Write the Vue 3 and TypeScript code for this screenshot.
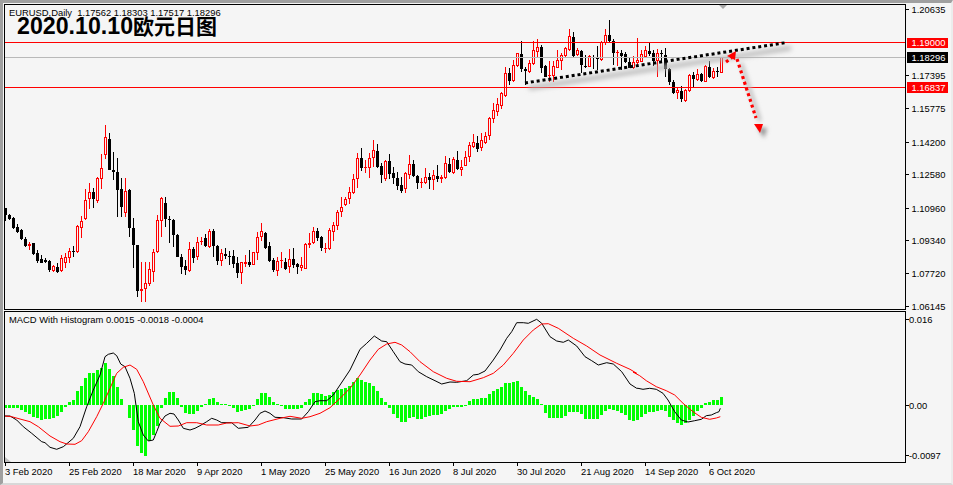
<script setup lang="ts">
type C = [number, number, number, number, number]
// [isUp, bodyTop, bodyBottom, wickTop, wickBottom] in 3x crop units
const segA: C[] = [
  [0,145,165,145,183],[0,165,177,162,180],[0,173,204,172,207],[0,201,216,192,218],[0,210,237,208,240],
  [0,237,258,230,262],[1,252,257,245,270],[0,250,282,248,285],[0,278,304,270,308],[0,296,308,285,310],
  [0,301,306,293,310],[0,303,330,300,335],[1,318,332,314,336],[0,321,335,310,338],[1,294,334,285,336],
  [1,291,310,280,325],[1,272,293,265,308],[0,272,274,258,290],[1,198,276,195,280],[1,184,203,168,235],
  [1,121,177,88,180],[1,96,118,70,148],[0,96,118,85,145],[1,54,123,52,128],[1,25,56,-18,88],
  [1,-69,-15,-105,-3],[0,-63,30,-81,30],[0,30,36,-24,60],[0,35,90,-6,170],[0,87,140,55,170],
  [1,93,160,55,170],[0,90,203,88,230],[0,204,254,175,323],[0,255,392,255,412],[1,388,392,305,425],
  [1,370,386,305,425],[1,328,372,305,378],[1,277,335,268,365],[1,181,275,165,280],[1,114,184,112,230],
  [0,130,176,112,200],[0,176,178,168,248],[0,180,225,178,262],[0,225,290,222,292],[0,290,320,282,342],
  [0,319,330,300,345],[1,268,332,245,335],[0,267,294,260,308],[1,247,292,232,300],[1,243,245,232,255],
  [0,235,257,222,260],[1,214,261,208,264],[0,213,259,207,290],[0,257,302,255,315],[1,280,302,268,318],
  [0,282,287,265,298],[0,287,289,272,315],[0,288,312,270,323],[0,310,338,290,355],[1,307,340,305,372],
  [1,306,312,285,322],[0,306,314,270,322],[1,277,314,275,316],[1,232,280,215,300],[1,214,230,190,244],
  [0,218,263,215,267],[0,258,302,245,305],[0,300,330,295,335],[1,304,332,290,348],[1,300,304,277,325],
  [0,306,326,295,330],[1,296,322,268,340],[0,296,315,265,325],[0,312,322,308,342],[1,314,324,292,333],
  [1,253,326,248,328],[1,250,256,218,265],[1,214,250,200,252],[0,213,233,205,243],
]
// i79..83 in real pixels
const segB: C[] = [
  [0,237,248,236,251],[1,248,249,243,253],[1,230,249,228,250],[1,225,232,222,241],[1,212,226,210,230],
]
const segC: C[] = [
  [1,381,396,351,411],[1,358,374,350,378],[1,337,358,320,372],[1,298,340,282,342],[1,235,298,220,323],
  [0,235,263,205,272],[1,261,263,240,278],[1,235,263,220,293],[1,210,233,180,262],[0,213,261,192,265],
  [0,258,285,250,310],[1,243,298,240,302],[0,243,282,222,298],[0,280,293,262,312],[0,293,318,277,330],
  [0,316,332,290,338],[1,280,328,277,338],[1,253,284,225,298],[0,253,288,240,292],[0,288,308,285,326],
  [1,307,309,293,325],[1,292,308,265,312],[0,292,300,278,327],[1,286,299,270,330],[0,288,296,255,305],
  [1,290,298,284,308],[1,250,293,228,296],[0,252,275,235,280],[1,238,278,232,282],[0,240,268,212,270],
  [1,260,269,240,288],[1,232,257,212,258],[1,196,230,185,245],[1,187,200,163,205],[0,190,208,168,215],
]
const segD: C[] = [
  [1,420,445,400,452],[1,408,430,395,432],[1,354,407,350,420],[1,330,358,310,370],[1,312,335,295,348],
  [1,280,318,275,328],[1,220,288,202,290],[0,218,242,205,255],[1,196,243,180,245],[1,160,198,158,200],
  [0,162,207,123,215],[0,207,212,200,255],[1,190,215,180,218],[1,151,192,123,195],[1,142,155,118,170],
  [0,140,203,135,218],[0,198,230,195,232],[1,226,229,183,245],[1,199,228,182,245],[1,180,203,150,205],
  [1,165,183,158,210],[1,145,167,142,172],[1,109,150,87,152],[0,112,168,97,172],[1,150,166,145,168],
  [0,153,195,150,218],[0,197,200,165,203],[1,168,200,165,202],[0,170,173,165,208],[0,172,178,138,210],
  [1,125,180,122,182],[1,106,130,88,135],[0,106,124,60,127],[0,122,158,118,195],[1,157,159,150,197],
  [0,160,167,150,210],[0,163,186,155,188],[0,187,205,175,205],[1,186,205,168,207],[1,180,190,115,200],
  [1,163,185,150,187],[1,150,170,138,172],[0,152,162,130,168],[0,160,183,150,197],[1,160,184,148,232],
  [0,160,163,150,185],[0,166,207,145,232],[0,207,245,205,255],[0,245,278,240,282],[1,270,278,260,297],
  [0,272,298,258,305],[1,270,302,268,305],[1,225,274,222,276],[0,225,238,215,262],[1,222,240,207,242],
  [0,222,242,218,245],[1,198,245,195,247],[0,202,232,183,235],[1,212,234,205,236],[0,212,214,200,232],
  [1,172,218,170,220],
]
const conv = (c: C, off: number, div: number) => ({
  up: c[0] === 1,
  bt: Math.round(off + c[1] / div),
  bb: Math.round(off + c[2] / div),
  wt: Math.round(off + c[3] / div),
  wb: Math.round(off + c[4] / div),
})
const candles = [
  ...segA.map(c => conv(c, 160, 3)),
  ...segB.map(c => conv(c, 0, 1)),
  ...segC.map(c => conv(c, 80, 3)),
  ...segD.map(c => conv(c, 0, 3)),
].map((c, i) => ({ ...c, x: 5 + 4 * i }))

const hist3 = [
  -8,-8,-8,-9,-15,-22,-28,-35,-40,-44,-43,-42,-38,-34,-20,-5,
  8,15,42,57,80,95,95,105,110,125,108,87,55,18,0,-38,-75,-122,-145,-152,-108,-90,-62,-8,
  20,40,40,20,-5,-25,-28,-28,-18,-5,3,17,20,10,4,2,-4,-10,-20,-18,-15,-12,-3,18,35,35,25,8,2,-2,
  -12,-12,-12,-12,-8,8,17,35,35,
  33,27,30,40,45,48,52,58,68,80,75,70,65,58,42,20,8,-10,-27,-40,-52,-50,-40,-37,-42,-42,-37,-33,-30,-30,-28,-17,-12,-5,-5,-5,-3,
  12,18,18,22,22,33,43,47,53,65,65,68,72,55,42,30,25,18,2,-25,-38,-40,-40,-38,-32,-20,-20,-20,-28,-42,-42,-42,-42,-30,-18,-12,-15,-18,-25,-30,-45,-48,-45,
  -35,-28,-22,-20,-18,-15,-18,-35,-45,-55,-60,-55,-45,-33,-18,-8,5,8,15,15,24,
]
const bars = hist3.map((v, i) => {
  const h = Math.max(v === 0 ? 0 : 1, Math.round(Math.abs(v) / 3))
  return { x: 4 + 4 * i, y: v >= 0 ? 405 - h : 405, h }
})

type P = [number, number]
const toPts = (pts: P[], xo: number) => pts.map(p => `${(xo + p[0] / 3).toFixed(1)},${(310 + p[1] / 3).toFixed(1)}`)
const blackLine = [
  ...toPts([[14,318],[30,318],[50,330],[70,350],[95,370],[125,395],[135,398],[150,412],[170,418],[190,410],[220,385],[240,350],[260,290],[280,240],[300,195],[315,140],[325,133],[340,129],[350,137],[362,162],[375,170],[390,205],[403,250],[415,335],[430,375],[445,393],[460,390],[470,365],[480,340],[495,318],[510,310],[522,312],[535,330],[550,355],[570,360],[585,355],[600,347],[620,335],[635,325],[650,330],[665,338],[695,338],[715,355],[745,352],[765,330],[780,310],[795,303],[810,310],[825,322],[850,323],[875,327],[905,327],[925,305],[945,275],[960,272]], 0),
  ...toPts([[20,272],[40,255],[60,225],[90,180],[120,118],[140,100],[163,78],[185,93],[200,95],[220,125],[240,155],[255,162],[275,165],[295,185],[320,200],[345,212],[365,222],[390,216],[410,217],[440,212],[460,195],[475,193],[495,183],[520,150],[540,120],[560,85],[575,65],[590,38],[610,38],[625,40],[650,28],[665,40],[690,80],[710,93],[730,97],[745,90],[770,108],[795,140],[815,152],[835,165],[860,158],[880,162],[905,185],[930,222],[950,235]], 320),
  ...toPts([[15,235],[30,238],[50,235],[70,238],[90,250],[105,270],[125,305],[145,330],[165,336],[185,332],[205,328],[220,317],[235,315],[250,308],[258,305],[262,295]], 633),
].join(' ')
const redLine = [
  ...toPts([[14,318],[35,320],[60,327],[90,335],[115,350],[150,378],[180,395],[200,402],[225,403],[245,392],[265,365],[290,320],[310,280],[330,235],[350,190],[370,172],[390,165],[410,178],[430,215],[460,285],[480,325],[510,349],[535,348],[560,338],[590,338],[620,345],[655,345],[680,339],[715,338],[750,348],[775,345],[800,335],[840,325],[870,319],[905,325],[930,320],[960,310]], 0),
  ...toPts([[30,293],[60,265],[90,235],[120,195],[150,150],[175,118],[200,102],[225,97],[245,105],[270,125],[300,155],[340,185],[380,205],[410,214],[450,215],[490,203],[520,190],[550,165],[580,130],[610,90],[640,60],[665,42],[685,41],[715,55],[760,85],[800,108],[840,135],[890,160],[930,178],[950,190]], 320),
  ...toPts([[0,186],[20,197],[40,212],[70,230],[100,242],[125,255],[150,280],[180,305],[205,322],[230,328],[250,324],[262,320]], 633),
].join(' ')

const priceTicks = [
  { y: 9, t: '1.20635' }, { y: 75, t: '1.17395' }, { y: 108, t: '1.15775' }, { y: 142, t: '1.14200' },
  { y: 174, t: '1.12580' }, { y: 208, t: '1.10960' }, { y: 240, t: '1.09340' }, { y: 273, t: '1.07720' },
  { y: 306, t: '1.06145' },
]
const tags = [
  { y: 38, h: 10, t: '1.19000', c: 'tag-red' },
  { y: 52, h: 11, t: '1.18296', c: 'tag-black' },
  { y: 82, h: 11, t: '1.16837', c: 'tag-red' },
]
const macdTicks = [
  { y: 319, t: '0.016' }, { y: 405, t: '0.00' }, { y: 455, t: '-0.0097' },
]
const dates = ['3 Feb 2020','25 Feb 2020','18 Mar 2020','9 Apr 2020','1 May 2020','25 May 2020','16 Jun 2020','8 Jul 2020','30 Jul 2020','21 Aug 2020','14 Sep 2020','6 Oct 2020']
</script>

<template>
  <div class="window">
    <div class="pane pane-main">
      <div class="plot">
        <div class="symbol">EURUSD,Daily&nbsp;&nbsp;1.17562 1.18303 1.17517 1.18296</div>
        <div class="title"><span class="title-num">2020.10.10</span><span class="title-cjk">欧元日图</span></div>
        <svg class="chart" width="900" height="304" viewBox="5 5 900 304">
          <defs>
            <filter id="soft" x="-10%" y="-60%" width="120%" height="220%">
              <feGaussianBlur stdDeviation="2.4" />
            </filter>
            <filter id="soft2" x="-40%" y="-30%" width="180%" height="160%">
              <feGaussianBlur stdDeviation="2" />
            </filter>
          </defs>
          <g class="crisp">
            <template v-for="c in candles" :key="c.x">
              <rect :x="c.x" :y="c.wt" width="1" :height="Math.max(1, c.wb - c.wt)" :fill="c.up ? '#ff0000' : '#000000'" />
              <template v-if="c.bb - c.bt <= 1">
                <rect :x="c.x - 1" :y="c.bt" width="3" height="1" :fill="c.up ? '#ff0000' : '#000000'" />
              </template>
              <rect v-else-if="c.up" :x="c.x - 0.5" :y="c.bt + 0.5" width="2" :height="c.bb - c.bt - 1" fill="#f5f5f5" stroke="#ff0000" stroke-width="1" />
              <rect v-else :x="c.x - 1" :y="c.bt" width="3" :height="c.bb - c.bt" fill="#000000" />
            </template>
            <rect x="5" y="42" width="900" height="1" fill="#ff0000" />
            <rect x="5" y="87" width="900" height="1" fill="#ff0000" />
            <rect x="5" y="57" width="900" height="1" fill="#b9b9b9" />
          </g>
          <polygon points="719,5 727,5 723,9" fill="#a8a8a8" />

          <g filter="url(#soft)">
            <line x1="529" y1="88" x2="791" y2="48" stroke="#b4b4b4" stroke-width="4" />
          </g>
          <g filter="url(#soft2)">
            <line x1="741" y1="63" x2="760" y2="121" stroke="#bcbcbc" stroke-width="3.5" />
            <polygon points="758,128 767,128 764,138" fill="#8c8c8c" />
          </g>
          <line class="trend" x1="525" y1="83" x2="787" y2="42.5" />
          <line class="dots" x1="726" y1="62" x2="732" y2="57.5" />
          <line class="dots" x1="737" y1="59" x2="756" y2="118" />
          <polygon points="736,51 727,56 735,60" fill="#ff0000" />
          <polygon points="754,124 763,124 760,133" fill="#ff0000" />
        </svg>
      </div>
      <svg class="axis" width="45" height="306" viewBox="906 4 45 306">
        <g v-for="p in priceTicks" :key="p.t">
          <rect class="crisp" x="906" :y="p.y" width="3" height="1" fill="#000" />
          <text x="911.5" :y="p.y + 3.5">{{ p.t }}</text>
        </g>
        <g v-for="p in tags" :key="p.t">
          <rect class="crisp" :class="p.c" x="907" :y="p.y" width="41" :height="p.h" />
          <text class="tag-text" x="911.5" :y="p.y + p.h / 2 + 3">{{ p.t }}</text>
        </g>
      </svg>
    </div>

    <div class="pane pane-macd">
      <div class="plot">
        <div class="symbol">MACD With Histogram 0.0015 -0.0018 -0.0004</div>
        <svg class="chart" width="900" height="150" viewBox="5 312 900 150">
          <g class="crisp">
            <rect v-for="b in bars" :key="b.x" :x="b.x" :y="b.y" width="3" :height="b.h" fill="#00ff00" />
          </g>
          <polyline :points="blackLine" fill="none" stroke="#000" stroke-width="1" />
          <polyline :points="redLine" fill="none" stroke="#ff0000" stroke-width="1" />
          <polygon points="5,457 5,462 11,462" fill="#c0c0c0" />
        </svg>
      </div>
      <svg class="axis" width="45" height="152" viewBox="906 311 45 152">
        <g v-for="p in macdTicks" :key="p.t">
          <rect class="crisp" x="906" :y="p.y" width="3" height="1" fill="#000" />
          <text x="909" :y="p.y + 3.5">{{ p.t }}</text>
        </g>
      </svg>
    </div>

    <div class="timeline">
      <div v-for="d in dates" :key="d" class="date">{{ d }}</div>
    </div>
  </div>
</template>

<style scoped>
.window {
  box-sizing: border-box;
  width: 953px;
  height: 485px;
  overflow: hidden;
  background: #f5f5f5;
  border-top: 3px solid #a0a0a0;
  border-left: 3px solid #a0a0a0;
  border-bottom: 2px solid #d8d8d8;
  border-right: 2px solid #ececec;
  padding: 1px 0 0 1px;
  display: flex;
  flex-direction: column;
  font-family: "Liberation Sans", "Noto Sans CJK SC", sans-serif;
  color: #000;
}
.pane {
  display: flex;
  flex: none;
}
.pane-macd {
  margin-top: 1px;
}
.plot {
  position: relative;
  flex: none;
  width: 900px;
  border: 1px solid #000;
  line-height: 0;
}
.chart,
.axis {
  display: block;
  flex: none;
}
.axis text {
  font-family: "Liberation Sans", sans-serif;
  font-size: 9.4px;
  fill: #000;
}
.axis .tag-text {
  fill: #fff;
}
.tag-red {
  fill: #ff0000;
}
.tag-black {
  fill: #000;
}
.crisp {
  shape-rendering: crispEdges;
}
.symbol {
  position: absolute;
  left: 4px;
  top: 2px;
  font-size: 9.4px;
  line-height: 12px;
  white-space: nowrap;
  color: #000;
}
.title {
  position: absolute;
  left: 12px;
  top: 8px;
  font-weight: 700;
  line-height: 26px;
  white-space: nowrap;
  color: #000;
}
.title-num {
  font-size: 23.2px;
}
.title-cjk {
  font-size: 21px;
}
.trend {
  stroke: #000;
  stroke-width: 3;
  stroke-dasharray: 3 2.9;
}
.dots {
  stroke: #ff0000;
  stroke-width: 3.2;
  stroke-dasharray: 3 3;
}
.timeline {
  display: flex;
  padding-left: 1px;
}
.date {
  position: relative;
  flex: none;
  width: 64px;
  padding-top: 3px;
  font-size: 9.4px;
  line-height: 12px;
  white-space: nowrap;
}
.date::before {
  content: "";
  position: absolute;
  left: 0;
  top: 0;
  width: 1px;
  height: 3px;
  background: #000;
}
</style>

<style>
body {
  margin: 0;
  background: #f5f5f5;
}
</style>
